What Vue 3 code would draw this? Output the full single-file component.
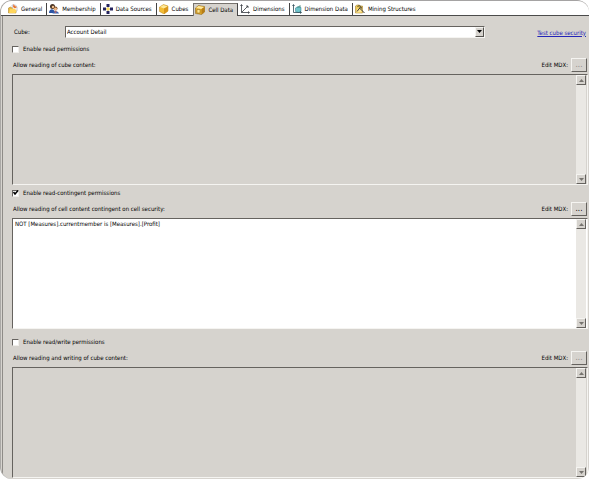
<script setup>
import { ref } from 'vue'

const tabs = [
  { id: 'general', label: 'General' },
  { id: 'membership', label: 'Membership' },
  { id: 'sources', label: 'Data Sources' },
  { id: 'cubes', label: 'Cubes' },
  { id: 'cell', label: 'Cell Data' },
  { id: 'dimensions', label: 'Dimensions' },
  { id: 'dimdata', label: 'Dimension Data' },
  { id: 'mining', label: 'Mining Structures' },
]
const active = ref('cell')
const cube = ref('Account Detail')

const sections = ref([
  { id: 'read', check: 'Enable read permissions', label: 'Allow reading of cube content:', on: false, mdx: '' },
  {
    id: 'contingent',
    check: 'Enable read-contingent permissions',
    label: 'Allow reading of cell content contingent on cell security:',
    on: true,
    mdx: 'NOT [Measures].currentmember is [Measures].[Profit]',
  },
  { id: 'write', check: 'Enable read/write permissions', label: 'Allow reading and writing of cube content:', on: false, mdx: '' },
])
</script>

<template>
  <main class="window">
    <nav class="tabs" role="tablist">
      <button
        v-for="t in tabs"
        :key="t.id"
        type="button"
        role="tab"
        class="tab"
        :class="{ active: active === t.id, before: t.id === 'cubes' }"
        :aria-selected="active === t.id"
        @click="active = t.id"
      >
        <svg class="icon" viewBox="0 0 20 20" aria-hidden="true">
          <g v-if="t.id === 'general'">
            <path d="M1 8l4-2 3 2h8v10H1z" fill="#e9b93c" stroke="#a87b1c" />
            <path d="M8 2h7l3 4v8l-8 1z" fill="#fff" stroke="#8c8fa8" />
            <path d="M2 18l2-8 8-1 5 3-2 6z" fill="#ffd65c" />
            <path d="M11 0l3 4 4 2-4 3-4-3z" fill="#e87432" />
          </g>
          <g v-else-if="t.id === 'membership'">
            <circle cx="7" cy="5" r="5" fill="#4a3424" />
            <circle cx="8" cy="6" r="2.5" fill="#f1c08e" />
            <path d="M0 18c0-10 11-10 12 0z" fill="#2d56a5" />
            <circle cx="13" cy="9" r="4" fill="#7b4f28" />
            <circle cx="13" cy="10" r="3" fill="#f4b987" />
            <path d="M7 19c1-7 11-7 13 0z" fill="#3a65b4" />
            <path d="M10 15l3 3 3-3z" fill="#e9654a" />
          </g>
          <g v-else-if="t.id === 'sources'">
            <path d="M10 3v14M3 10h14" stroke="#8b8b8b" stroke-width="1.500" />
            <path d="M7 0h6v6H7zM7 14h6v6H7zM0 7h6v6H0zM14 7h6v6h-6z" fill="#25245f" />
            <path d="M10 6l4 4-4 4-4-4z" fill="#ffe25c" />
          </g>
          <g v-else-if="t.id === 'cubes'">
            <path d="M1 6l8-5 9 3v10l-8 6-9-5z" fill="#f3bd35" stroke="#b98620" />
            <path d="M2 6l7-4 8 3-7 4z" fill="#ffe99a" />
            <path d="M10 9l8-4v9l-8 6z" fill="#d9971c" />
          </g>
          <g v-else-if="t.id === 'cell'">
            <path d="M1 6l6-5 12 2v11l-6 5-12-2z" fill="#e5ad2c" stroke="#7c5915" />
            <path d="M2 6l5-4 11 2-5 4z" fill="#ffeaa0" />
            <path d="M13 8l6-4v10l-6 5z" fill="#b87e17" />
            <path d="M4 9h6v7H4z" fill="#ffe58e" stroke="#8a6316" />
          </g>
          <g v-else-if="t.id === 'dimensions'" fill="none" stroke="#33373d" stroke-width="1.600">
            <path d="M3 2v15h15M3 17L16 4M1 4l2-3 2 3M16 15l3 2-3 2M12 4h4v4" />
          </g>
          <g v-else-if="t.id === 'dimdata'">
            <path d="M7 8l5-3 6 2v8l-5 2-6-2z" fill="#70c5cb" stroke="#2b788c" />
            <path d="M3 2v15h15M1 4l2-3 2 3M16 15l3 2-3 2" fill="none" stroke="#284954" stroke-width="1.600" />
            <path d="M11 8l5-5v4" fill="none" stroke="#376" stroke-width="1.500" />
          </g>
          <g v-else>
            <path d="M1 4l3-2h5l2 2h4v14H1z" fill="#f0cb58" stroke="#9a7423" />
            <path d="M2 17l3-8h9l-1 8z" fill="#ffe797" />
            <path d="M5 5c4-3 8 0 8 4M11 6L4 15M9 8l10 10" fill="none" stroke="#3c3a32" stroke-width="2" />
          </g>
        </svg>
        {{ t.label }}
      </button>
    </nav>

    <div class="panel">
      <div class="cube-row">
        <label for="cube">Cube:</label>
        <div class="select-wrap">
          <select id="cube" v-model="cube">
            <option>Account Detail</option>
          </select>
          <span class="drop" aria-hidden="true">
            <svg viewBox="0 0 5 3"><path d="M0 0h5L2.500 3z" /></svg>
          </span>
        </div>
        <a href="#test">Test cube security</a>
      </div>

      <section v-for="s in sections" :key="s.id" :class="['section', s.id]">
        <label class="check">
          <input v-model="s.on" type="checkbox" />
          <svg v-if="s.on" class="tick" viewBox="0 0 7 7" aria-hidden="true">
            <path d="M1.500 3l1.500 2 3-3.500" />
          </svg>
          <span>{{ s.check }}</span>
        </label>
        <div class="caption">
          <label :for="'mdx-' + s.id">{{ s.label }}</label>
          <label class="edit" :for="'edit-' + s.id">Edit MDX:</label>
          <button :id="'edit-' + s.id" type="button" class="bevel more" :disabled="!s.on">...</button>
        </div>
        <div class="box" :class="{ on: s.on }">
          <textarea :id="'mdx-' + s.id" v-model="s.mdx" :disabled="!s.on" spellcheck="false"></textarea>
          <div class="scroll">
            <button type="button" class="bevel arrow" aria-label="Scroll up">
              <svg viewBox="0 0 5 3"><path d="M0 3h5L2.500 0z" /></svg>
            </button>
            <button type="button" class="bevel arrow" aria-label="Scroll down">
              <svg viewBox="0 0 5 3"><path d="M0 0h5L2.500 3z" /></svg>
            </button>
          </div>
        </div>
      </section>
    </div>
  </main>
</template>

<style>
body {
  background: #fff;
}
</style>

<style scoped>
* {
  box-sizing: border-box;
}
.window {
  overflow: hidden;
  border-top: 1px solid #a5a3a3;
  border-left: 1px solid #aaa8a5;
  border-radius: 12px;
  background: #d6d3ce;
  color: #000;
  font: 6px/8px "DejaVu Sans Condensed", "DejaVu Sans", sans-serif;
}
button,
select,
textarea {
  margin: 0;
  border-radius: 0;
  color: inherit;
  font: inherit;
}
.tabs {
  display: flex;
  align-items: flex-end;
  height: 15px;
  padding-left: 5px;
  border-bottom: 1px solid #4b4b4b;
  background: #fff;
}
.tab {
  display: flex;
  align-items: center;
  gap: 3px;
  height: 12px;
  padding: 0 4px 0 2px;
  border: 0;
  border-right: 1px solid #444;
  background: transparent;
  white-space: nowrap;
}
.tab.before,
.tab:last-child {
  border-right-color: transparent;
}
.tab.active {
  height: 13px;
  margin-bottom: -1px;
  padding: 0 4px 1px 1px;
  border-top: 1px solid #77736e;
  border-left: 1px solid #77736e;
  background: #d6d3ce;
}
.icon {
  width: 10px;
  height: 10px;
  flex: none;
}
.panel {
  margin-left: 1px;
  padding: 9px 1px 1px 9px;
  border-left: 1px solid #8e8b87;
}
.cube-row {
  display: grid;
  grid-template-columns: 53px 1fr 103px;
  align-items: center;
  height: 13px;
}
.cube-row label {
  padding-left: 2px;
}
.cube-row a {
  padding: 2px 2px 0 0;
  color: #2424b8;
  text-align: right;
}
.select-wrap {
  position: relative;
}
select {
  display: block;
  width: 100%;
  height: 12px;
  padding: 0 12px 0 1px;
  appearance: none;
  border: 1px solid;
  border-color: #66635f #f5f4f1 #f5f4f1 #66635f;
  background: #fff;
}
.drop {
  position: absolute;
  top: 1px;
  right: 1px;
  display: grid;
  place-items: center;
  width: 9px;
  height: 10px;
  border: 1px solid;
  border-color: #f5f4f1 #55524e #55524e #f5f4f1;
  background: #d6d3ce;
  pointer-events: none;
}
.drop svg,
.arrow svg {
  width: 5px;
  height: 3px;
}
.section {
  padding-top: 4px;
}
.section.read {
  padding-top: 7px;
}
.section.write {
  padding-top: 9px;
}
.check {
  position: relative;
  display: flex;
  align-items: center;
  gap: 4px;
  width: max-content;
  height: 8px;
}
.check input {
  width: 7px;
  height: 7px;
  margin: 0;
  appearance: none;
  border: 1px solid;
  border-color: #66635f #f0eeea #f0eeea #66635f;
  background: #fff;
}
.tick {
  position: absolute;
  top: 0;
  left: 0;
  width: 7px;
  height: 7px;
  fill: none;
  stroke: #000;
  stroke-width: 1.500;
  pointer-events: none;
}
.caption {
  display: flex;
  align-items: center;
  height: 14px;
  margin: 5px 0 2px;
  padding: 0 1px;
}
.edit {
  margin-left: auto;
  padding-right: 3px;
}
.bevel {
  padding: 0;
  border: 1px solid;
  border-color: #f5f4f1 #65625e #65625e #f5f4f1;
  background: #d6d3ce;
}
.more {
  width: 16px;
  height: 14px;
  font-size: 8px;
}
.more:disabled {
  color: #8d8a85;
}
.box {
  display: flex;
  height: 111px;
  padding-right: 1px;
  border: 1px solid;
  border-color: #66635f #f5f4f1 #f5f4f1 #66635f;
  background: #d6d3ce;
}
.box.on {
  background: #fff;
}
textarea {
  flex: 1;
  min-width: 0;
  padding: 1px 2px;
  resize: none;
  border: 0;
  outline: 0;
  background: transparent;
}
.scroll {
  display: flex;
  flex-direction: column;
  justify-content: space-between;
  width: 10px;
  background: #eae8e4;
}
.arrow {
  display: grid;
  place-items: center;
  width: 10px;
  height: 10px;
}
.arrow svg {
  fill: #77746f;
}
</style>
